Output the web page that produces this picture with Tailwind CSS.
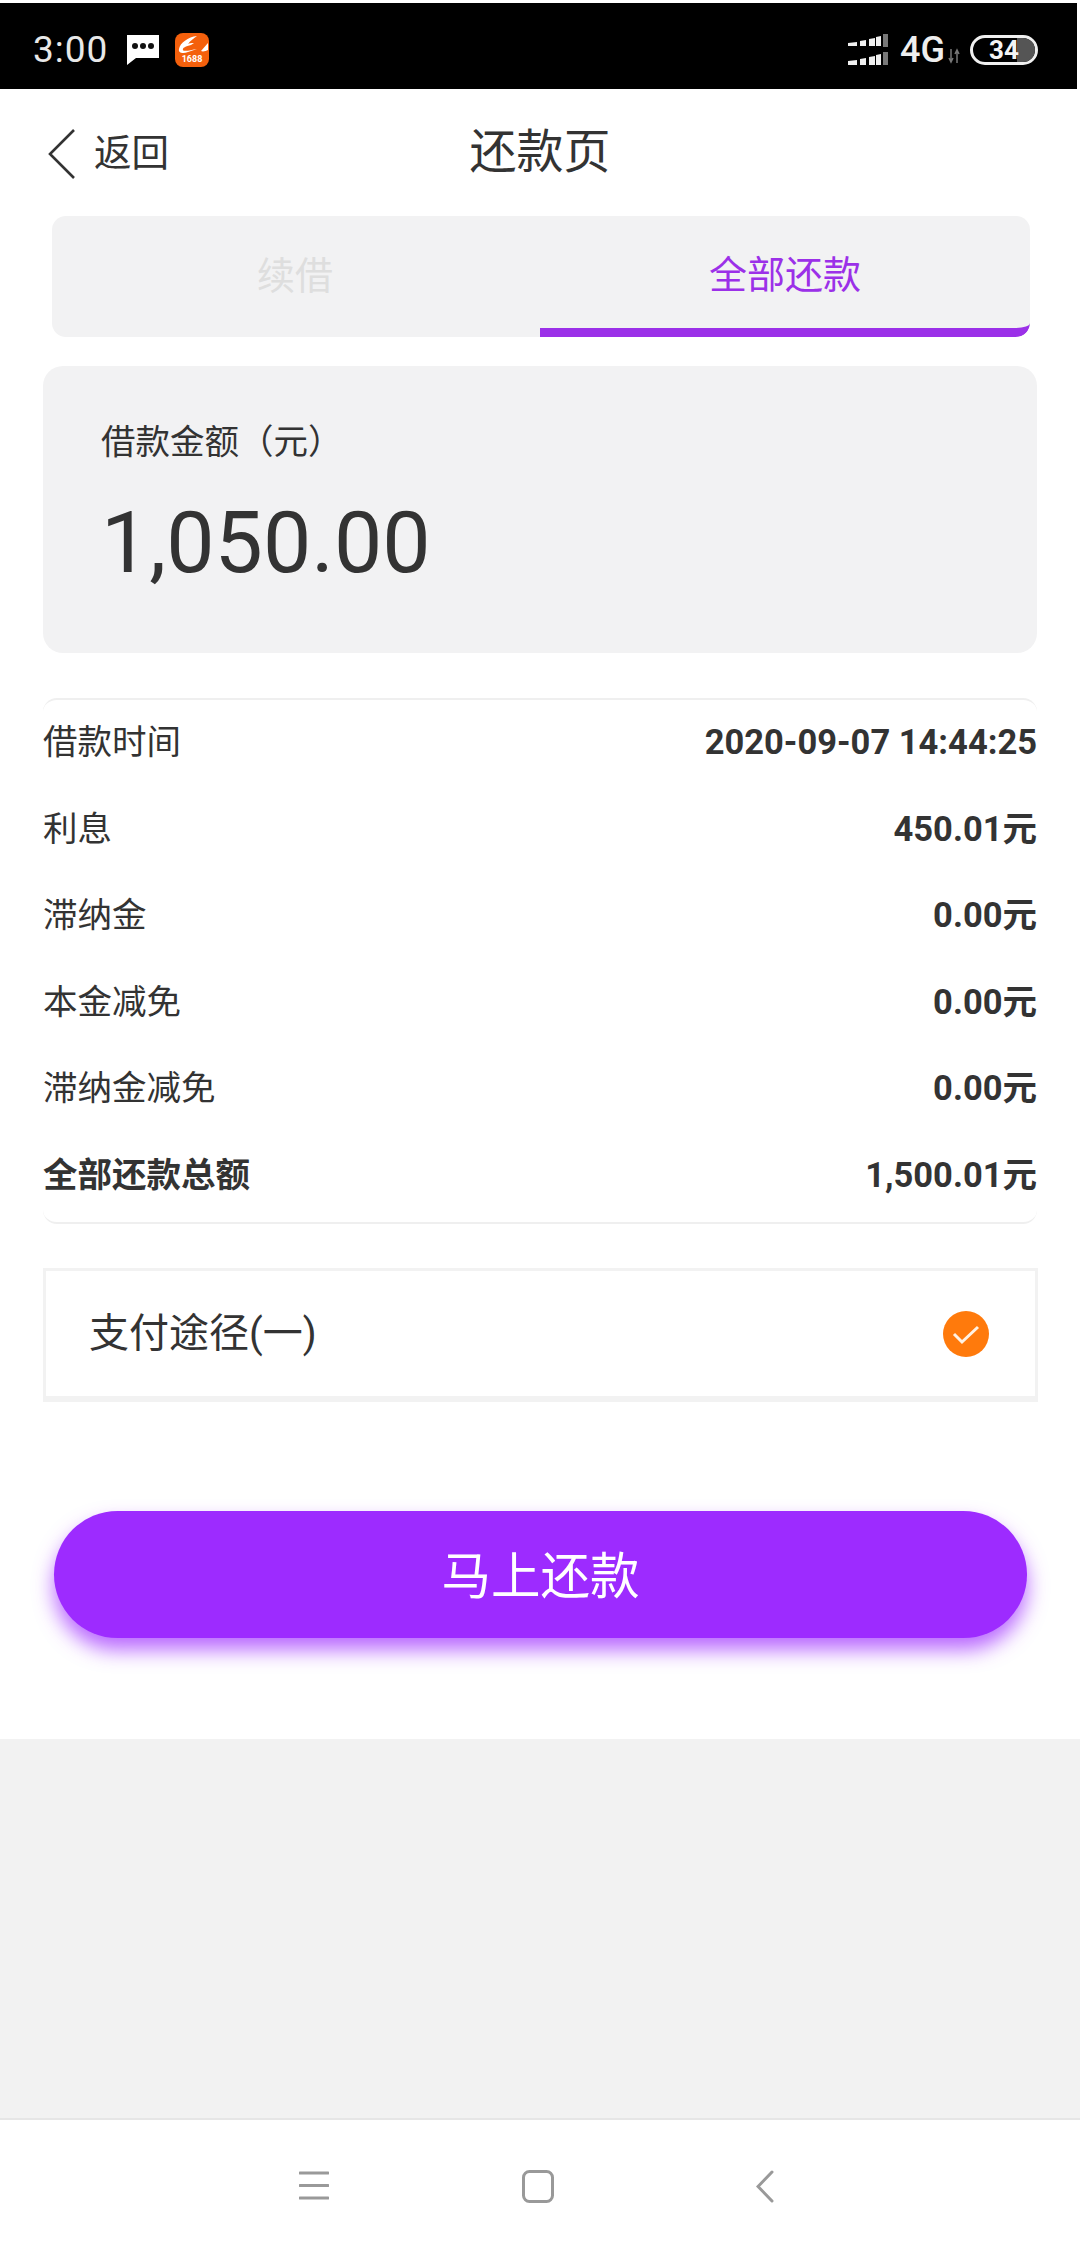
<!DOCTYPE html>
<html lang="zh-CN">
<head>
    <meta charset="UTF-8">
    <meta name="viewport" content="width=device-width, initial-scale=1.0">
    <title>还款页</title>
    <script src="https://cdn.jsdelivr.net/npm/@tailwindcss/browser@4"></script>
</head>
<body class="bg-white font-['Roboto','Noto_Sans_CJK_SC',sans-serif] text-[#333333]">
    <div class="flex flex-col w-[1080px] h-[2248px] overflow-hidden">
        <!-- Status bar -->
        <div class="flex items-center justify-between shrink-0 h-[86px] mt-[3px] mr-[3px] bg-black pl-[33px] pr-[39px] pt-[7px]">
            <div class="flex items-center">
                <span class="text-[37px] leading-none tracking-[1px] text-[#e8e8e8] w-[93px]">3:00</span>
                <svg width="33" height="31" viewBox="0 0 33 31"><path d="M1 1h32v23H10l-9 7z" fill="#fff"/><circle cx="9" cy="12" r="3" fill="#111"/><circle cx="17" cy="12" r="3" fill="#111"/><circle cx="25" cy="12" r="3" fill="#111"/></svg>
                <div class="relative ml-[16px] w-[34px] h-[34px] rounded-[8px] bg-[#f4600c] overflow-hidden">
                    <svg class="absolute inset-0" width="34" height="34" viewBox="0 0 34 34"><path d="M22 3C13 4 5 10 4 16c-1 4 4 5 9 3l9-3c-6 1-13 3-14 1-1-2 3-4 8-5l3-2c-3 0-5 0-6 1 2-3 6-6 9-8zM33 10l-7 8c2 1 5 0 7-1z" fill="#fff"/></svg>
                    <span class="absolute left-0 right-0 bottom-[3px] text-center text-[9px] leading-none font-bold text-white">1688</span>
                </div>
            </div>
            <div class="flex items-center">
                <svg width="40" height="32" viewBox="0 0 40 32"><g fill="#f0f0f0"><path d="M0 9l9-1v4H0zM12 7l6-1v6h-6zM21 5l6-1v8h-6zM28 3l5-1v10h-5z"/><path d="M0 27l9-1v5H0zM12 25l6-1v7h-6zM21 23l6-1v9h-6zM28 21l5-1v11h-5z"/></g><path d="M35 0h5v13h-5zM35 18h5v13h-5z" fill="#777"/></svg>
                <span class="ml-[12px] w-[44px] text-[36px] leading-none font-medium text-[#eeeeee]">4G</span>
                <svg class="ml-[4px] mt-[13px]" width="12" height="16" viewBox="0 0 12 16"><path d="M3 1v12M1 10l2 4 2-4M9 15V3M7 6l2-4 2 4" fill="none" stroke="#777" stroke-width="1.5"/></svg>
                <div class="relative ml-[10px] w-[68px] h-[30px] rounded-full border-[3px] border-[#f0f0f0] overflow-hidden flex items-center justify-center">
                    <div class="absolute right-0 top-0 bottom-0 w-[18px] bg-[#555555]"></div>
                    <span class="relative text-[26px] leading-none font-bold text-[#f4f4f4]">34</span>
                </div>
            </div>
        </div>

        <!-- Page -->
        <div class="shrink-0 h-[1650px] bg-white">
            <!-- Header -->
            <div class="relative flex items-center justify-center h-[127px]">
                <div class="absolute left-[48px] top-[40px] flex items-center">
                    <svg width="28" height="50" viewBox="0 0 28 50"><path d="M26 1L2 25l24 24" fill="none" stroke="#333" stroke-width="2.6"/></svg>
                    <span class="ml-[18px] text-[37.5px] leading-none">返回</span>
                </div>
                <h1 class="text-[47px] leading-none font-normal -mt-[3px]">还款页</h1>
            </div>

            <!-- Tabs -->
            <div class="flex mx-[52px] w-[978px] h-[121px] rounded-[14px] bg-[#f2f2f3] overflow-hidden">
                <div class="flex flex-1 items-center justify-center text-[38px] text-[#dedede] -ml-[2px]">续借</div>
                <div class="flex flex-1 items-center justify-center pt-[6px] text-[38px] text-[#9b30e8] border-b-[9px] border-[#9b30e8] rounded-br-[14px]">全部还款</div>
            </div>

            <!-- Amount card -->
            <div class="mt-[29px] mx-[43px] h-[287px] rounded-[20px] bg-[#f2f2f3] pl-[58px] pt-[56px]">
                <p class="text-[34.5px] leading-[40px]">借款金额（元）</p>
                <p class="mt-[31px] text-[86px] leading-[100px]">1,050.00</p>
            </div>

            <!-- Details -->
            <div class="flex flex-col justify-center mt-[45px] mx-[43px] h-[526px] pb-[3px] rounded-[14px] border-y-2 border-[#efefef]">
                <div class="flex items-center justify-between h-[87.5px] text-[34.5px]"><span>借款时间</span><span class="font-bold">2020-09-07 14:44:25</span></div>
                <div class="flex items-center justify-between h-[87.5px] text-[34.5px]"><span>利息</span><span class="font-bold">450.01元</span></div>
                <div class="flex items-center justify-between h-[87.5px] text-[34.5px]"><span>滞纳金</span><span class="font-bold">0.00元</span></div>
                <div class="flex items-center justify-between h-[87.5px] text-[34.5px]"><span>本金减免</span><span class="font-bold">0.00元</span></div>
                <div class="flex items-center justify-between h-[87.5px] text-[34.5px]"><span>滞纳金减免</span><span class="font-bold">0.00元</span></div>
                <div class="flex items-center justify-between h-[87.5px] text-[34.5px] font-bold"><span>全部还款总额</span><span>1,500.01元</span></div>
            </div>

            <!-- Payment channel -->
            <div class="flex items-center justify-between mt-[44px] mx-[43px] w-[995px] h-[134px] border-[3px] border-b-[6px] border-[#f2f2f2] pl-[43px] pr-[46px]">
                <span class="text-[40px]">支付途径(一)</span>
                <svg width="46" height="46" viewBox="0 0 46 46"><circle cx="23" cy="23" r="23" fill="#ff7a0c"/><path d="M11 23l8 8 16-15" fill="none" stroke="#fff2e4" stroke-width="3"/></svg>
            </div>

            <!-- Submit -->
            <button class="block mt-[109px] mx-[54px] w-[973px] h-[127px] pt-[5px] rounded-full bg-[#9d2bff] text-[49.5px] text-white shadow-[0_12px_20px_rgba(157,43,255,0.7)]">马上还款</button>
        </div>

        <!-- Empty area -->
        <div class="flex-1 bg-[#f2f2f2]"></div>

        <!-- Nav bar -->
        <div class="flex items-center shrink-0 h-[130px] border-t-2 border-[#e6e6e6] bg-white pl-[299px] pt-[4px]">
            <svg width="30" height="30" viewBox="0 0 30 30"><path d="M1 2h28M1 14.5h28M1 27h28" stroke="#999" stroke-width="3" stroke-linecap="round"/></svg>
            <svg class="ml-[193px]" width="32" height="33" viewBox="0 0 32 33"><rect x="1.5" y="1.5" width="29" height="30" rx="6" fill="none" stroke="#999" stroke-width="3"/></svg>
            <svg class="ml-[202px]" width="18" height="33" viewBox="0 0 18 33"><path d="M16 2L2 16.5 16 31" fill="none" stroke="#999" stroke-width="3" stroke-linecap="round"/></svg>
        </div>
    </div>
</body>
</html>
